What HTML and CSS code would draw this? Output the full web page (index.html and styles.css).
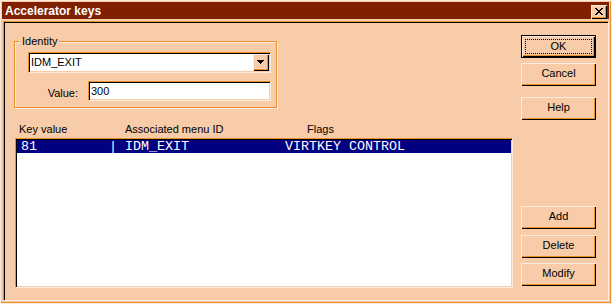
FILE: index.html
```html
<!DOCTYPE html>
<html>
<head>
<meta charset="utf-8">
<title>Accelerator keys</title>
<link rel="stylesheet" href="styles.css">
</head>
<body>
<div class="window">
  <div class="titlebar">
    <span class="title">Accelerator keys</span>
    <div class="close-btn">
      <svg width="8" height="7" viewBox="0 0 8 7" shape-rendering="crispEdges">
        <rect x="0" y="0" width="2" height="1"/><rect x="6" y="0" width="2" height="1"/>
        <rect x="1" y="1" width="2" height="1"/><rect x="5" y="1" width="2" height="1"/>
        <rect x="2" y="2" width="4" height="1"/>
        <rect x="3" y="3" width="2" height="1"/>
        <rect x="2" y="4" width="4" height="1"/>
        <rect x="1" y="5" width="2" height="1"/><rect x="5" y="5" width="2" height="1"/>
        <rect x="0" y="6" width="2" height="1"/><rect x="6" y="6" width="2" height="1"/>
      </svg>
    </div>
  </div>
  <div class="client">
    <div class="left">
      <div class="group">
        <span class="legend">Identity</span>
        <div class="combo">
          <span class="combo-text">IDM_EXIT</span>
          <div class="drop-btn">
            <svg width="7" height="4" viewBox="0 0 7 4" shape-rendering="crispEdges">
              <rect x="0" y="0" width="7" height="1"/>
              <rect x="1" y="1" width="5" height="1"/>
              <rect x="2" y="2" width="3" height="1"/>
              <rect x="3" y="3" width="1" height="1"/>
            </svg>
          </div>
        </div>
        <div class="value-row">
          <span class="value-label">Value:</span>
          <div class="edit">300</div>
        </div>
      </div>
      <div class="list-head">
        <span class="col-key">Key value</span>
        <span class="col-menu">Associated menu ID</span>
        <span class="col-flags">Flags</span>
      </div>
      <div class="listbox">
        <div class="row selected">81         | IDM_EXIT            VIRTKEY CONTROL</div>
      </div>
    </div>
    <div class="buttons">
      <div class="btn default"><span class="focus">OK</span></div>
      <div class="btn btn-cancel">Cancel</div>
      <div class="btn btn-help">Help</div>
      <div class="btn btn-add">Add</div>
      <div class="btn btn-delete">Delete</div>
      <div class="btn btn-modify">Modify</div>
    </div>
  </div>
</div>
</body>
</html>
```

FILE: styles.css
```css
:root {
  --face: #f8cca8;
  --shadow: #e8902c;
  --hi: #fdebdc;
  --title: #802000;
}

html, body {
  margin: 0;
  padding: 0;
  background: var(--face);
}

body {
  font-family: "Liberation Sans", Arial, sans-serif;
  font-size: 11px;
  color: #000;
}

.window {
  box-sizing: border-box;
  width: 612px;
  height: 304px;
  background: var(--face);
  border: 1px solid var(--hi);
  padding: 1px 2px 1px 1px;
  box-shadow: inset -1px -1px 0 var(--shadow);
  display: flex;
  flex-direction: column;
}

.titlebar {
  height: 17px;
  flex: none;
  background: var(--title);
  display: flex;
  justify-content: space-between;
  align-items: flex-start;
}

.title {
  color: #fff;
  font-weight: bold;
  font-size: 12px;
  line-height: 19px;
  padding-left: 3px;
  height: 17px;
  overflow: hidden;
}

.close-btn {
  box-sizing: border-box;
  width: 16px;
  height: 14px;
  margin: 3px 2px 0 0;
  background: var(--face);
  box-shadow: inset 1px 1px 0 var(--hi), inset -1px -1px 0 #000, inset -2px -2px 0 var(--shadow);
  display: flex;
  align-items: center;
  justify-content: center;
  padding: 0 1px 1px 0;
}

.client {
  box-sizing: border-box;
  margin: 2px 0 0 1px;
  height: 280px;
  flex: none;
  border: 1px solid;
  border-color: var(--shadow) var(--hi) var(--hi) var(--shadow);
  box-shadow: inset 1px 1px 0 #000, inset -1px -1px 0 var(--face);
  padding: 1px;
  display: flex;
}

.left {
  width: 516px;
  flex: none;
  display: flex;
  flex-direction: column;
}

.group {
  position: relative;
  box-sizing: border-box;
  margin: 18px 0 0 9px;
  width: 263px;
  height: 67px;
  border: 1px solid var(--shadow);
  box-shadow: inset 1px 1px 0 var(--hi), 1px 1px 0 var(--hi);
  padding: 10px 0 0 13px;
}

.legend {
  position: absolute;
  left: 5px;
  top: -7px;
  padding: 0 2px;
  background: var(--face);
  line-height: 13px;
}

.combo {
  box-sizing: border-box;
  width: 243px;
  height: 21px;
  border: 1px solid;
  border-color: var(--shadow) var(--hi) var(--hi) var(--shadow);
  box-shadow: inset 1px 1px 0 #000, inset -1px -1px 0 var(--face);
  background: #fff;
  padding: 1px;
  display: flex;
}

.combo-text {
  flex: 1;
  line-height: 17px;
  padding-left: 1px;
}

.drop-btn {
  box-sizing: border-box;
  width: 16px;
  height: 17px;
  background: var(--face);
  box-shadow: inset 1px 1px 0 var(--hi), inset -1px -1px 0 #000, inset -2px -2px 0 var(--shadow);
  display: flex;
  align-items: center;
  justify-content: center;
  padding: 0 1px 1px 0;
}

.value-row {
  display: flex;
  margin-top: 8px;
}

.value-label {
  width: 50px;
  text-align: right;
  line-height: 20px;
  margin: 2px 10px 0 0;
}

.edit {
  box-sizing: border-box;
  width: 183px;
  height: 20px;
  border: 1px solid;
  border-color: var(--shadow) var(--hi) var(--hi) var(--shadow);
  box-shadow: inset 1px 1px 0 #000, inset -1px -1px 0 var(--face);
  background: #fff;
  padding: 1px 2px;
  line-height: 16px;
}

.list-head {
  display: flex;
  margin: 15px 0 0 14px;
  height: 13px;
  line-height: 13px;
}

.col-key { width: 106px; }
.col-menu { width: 182px; }

.listbox {
  box-sizing: border-box;
  margin: 2px 0 0 10px;
  width: 498px;
  height: 150px;
  border: 1px solid;
  border-color: var(--shadow) var(--hi) var(--hi) var(--shadow);
  box-shadow: inset 1px 1px 0 #000, inset -1px -1px 0 var(--face);
  background: #fff;
  padding: 1px;
}

.row {
  height: 13px;
  line-height: 13px;
  font-family: "Liberation Mono", "Courier New", monospace;
  font-size: 13.33px;
  white-space: pre;
  padding-left: 4px;
  overflow: hidden;
}

.row.selected {
  background: #000080;
  color: #fff;
}

.buttons {
  width: 75px;
  flex: none;
  display: flex;
  flex-direction: column;
  padding: 12px 0 13px 0;
  box-sizing: border-box;
}

.btn {
  box-sizing: border-box;
  width: 75px;
  height: 23px;
  flex: none;
  background: var(--face);
  box-shadow: inset 1px 1px 0 var(--hi), inset -1px -1px 0 #000, inset -2px -2px 0 var(--shadow);
  text-align: center;
  line-height: 21px;
}

.btn.default {
  border: 1px solid #000;
  padding: 3px;
}

.focus {
  display: block;
  box-sizing: border-box;
  height: 15px;
  border: 1px dotted #000;
  line-height: 13px;
}

.btn-cancel { margin-top: 5px; }
.btn-help { margin-top: 11px; }
.btn-add { margin-top: auto; }
.btn-delete { margin-top: 6px; }
.btn-modify { margin-top: 5px; }
```
